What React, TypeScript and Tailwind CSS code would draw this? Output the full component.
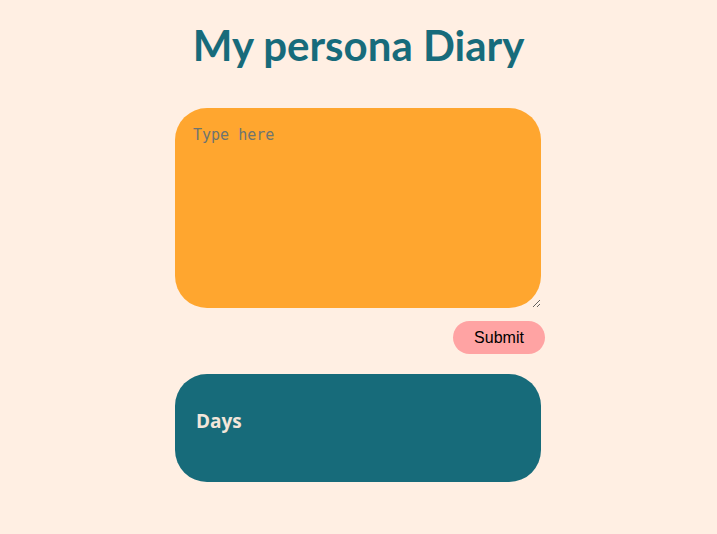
export default function App() {
  return (
    <div className="min-h-[534px] w-full bg-[#FFEFE3] flex flex-col items-center">
      <h1
        className="mt-[20px] text-[42px] leading-[50px] font-bold text-[#176B7B]"
        style={{ fontFamily: '"Lato", "Open Sans", sans-serif' }}
      >
        My persona Diary
      </h1>
      <div className="mt-[38px] w-[367px] flex flex-col">
        <textarea
          placeholder="Type here"
          className="block w-[366px] h-[200px] rounded-[32px] bg-[#FFA62F] px-[18px] py-[16px] text-[#333] placeholder:text-[#6E7470] outline-none border-0"
          style={{ fontFamily: '"DejaVu Sans Mono", "Liberation Mono", monospace', fontSize: 15 }}
        />
        <div className="flex justify-end mt-[13px] mr-[-3px]">
          <button
            className="h-[33px] w-[92px] rounded-full bg-[#FFA3A3] text-[16px] text-black"
            style={{ fontFamily: '"Liberation Sans", Arial, sans-serif' }}
          >
            Submit
          </button>
        </div>
        <div className="mt-[20px] w-[366px] h-[108px] rounded-[32px] bg-[#176B7A] px-[21px] pt-[33px]">
          <h2
            className="text-[19px] font-bold text-[#F3E6DA]"
            style={{ fontFamily: '"Comic Sans MS", "Open Sans", sans-serif' }}
          >
            Days
          </h2>
        </div>
      </div>
    </div>
  );
}
